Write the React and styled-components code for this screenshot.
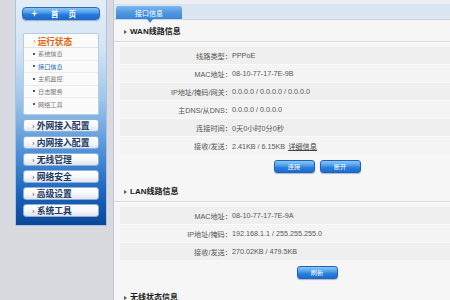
import styled, { createGlobalStyle } from 'styled-components';

const GlobalStyle = createGlobalStyle`
    html, body{
        margin: 0;
        padding: 0;
        overflow: hidden;
    }
    body{
        font-family: "Liberation Sans", "Noto Sans CJK SC", sans-serif;
    }
`

const Page = styled.div`
    display: flex;
    width: 450px;
    height: 300px;
    overflow: hidden;
    background: #d9dadf;
`

const Sidebar = styled.div`
    width: 113px;
    flex-shrink: 0;
    padding-left: 15px;
    box-sizing: border-box;
`

const Panel = styled.div`
    width: 92px;
    height: 226px;
    box-sizing: border-box;
    padding: 7px 6px 9px;
    display: flex;
    flex-direction: column;
    border: 1px solid #a9c4e2;
    border-top: none;
    background: linear-gradient(to bottom, #e3edf8 0%, #d3e4f4 22%, #9cc4ea 45%, #4d90d8 68%, #1b63bd 86%, #0b4797 100%);
`

const HomeButton = styled.div`
    height: 16px;
    box-sizing: border-box;
    display: flex;
    align-items: center;
    padding-left: 8px;
    gap: 13px;
    border: 1px solid #2a6bc0;
    border-radius: 4px;
    background: linear-gradient(to bottom, #8cc3f3 0%, #4b9ae8 45%, #2a7ee0 55%, #1b68cf 100%);
    box-shadow: 0 1px 1px rgba(20, 60, 120, 0.35);
    color: #fff;
    font-family: "Noto Sans CJK SC", sans-serif;
    font-size: 7.5px;
    font-weight: 700;
    span{
        letter-spacing: 10px;
    }
`

const MenuBox = styled.div`
    margin: 13px 1px 0;
    padding-bottom: 3px;
    background: #fbfbfb;
    border: 1px solid #b7cde5;
    border-radius: 2px;
`

const MenuHead = styled.div`
    height: 13px;
    display: flex;
    align-items: center;
    padding-left: 9px;
    gap: 2px;
    border-bottom: 1px solid #e3e3e3;
    color: #e0650e;
    font-family: "Noto Sans CJK SC", sans-serif;
    font-size: 8.6px;
    font-weight: 700;
`

const SubItem = styled.div`
    height: 12.5px;
    box-sizing: border-box;
    display: flex;
    align-items: center;
    padding-left: 9px;
    gap: 3px;
    border-bottom: ${p => p.$last ? 'none' : '1px solid #ececec'};
    color: ${p => p.$active ? '#2467b4' : '#777'};
    font-family: "Noto Sans CJK SC", sans-serif;
    font-size: 6.2px;
    &::before{
        content: '';
        width: 2px;
        height: 2px;
        background: ${p => p.$active ? '#2467b4' : '#555'};
    }
`

const MenuButton = styled.div`
    height: 13px;
    margin: 4px 1px 0;
    box-sizing: border-box;
    display: flex;
    align-items: center;
    padding-left: 8px;
    gap: 2px;
    border: 1px solid #8fb1d8;
    border-radius: 3px;
    background: linear-gradient(to bottom, #ffffff 0%, #f6f8fb 50%, #dfe5ee 100%);
    color: #1d3a63;
    font-family: "Noto Sans CJK SC", sans-serif;
    font-size: 8.8px;
    font-weight: 700;
`

const Chevron = styled.span`
    font-family: "Liberation Serif", serif;
    font-size: 8px;
    font-weight: 400;
`

const Content = styled.div`
    flex: 1;
    overflow: hidden;
    border-left: 1px solid #c4c9d0;
    background: #f6f6f6;
`

const Inner = styled.div`
    width: 400px;
`

const TopBar = styled.div`
    height: 20px;
    box-sizing: border-box;
    display: flex;
    align-items: flex-end;
    padding-left: 2px;
    border-bottom: 1px solid #c8d5e4;
    background: linear-gradient(to bottom, #eceef1 0, #eceef1 4px, #dae4f0 4px, #dde7f2 100%);
`

const Tab = styled.div`
    position: relative;
    width: 66px;
    height: 13px;
    display: flex;
    align-items: center;
    justify-content: center;
    border-radius: 3px 3px 0 0;
    background: linear-gradient(to bottom, #7db7ec 0%, #4d95df 55%, #3a86d6 100%);
    color: #fff;
    font-family: "Noto Sans CJK SC", sans-serif;
    font-size: 7px;
    &::after{
        content: '';
        position: absolute;
        left: 31px;
        bottom: -4px;
        border-left: 3px solid transparent;
        border-right: 3px solid transparent;
        border-top: 4px solid #3a86d6;
    }
`

const Section = styled.div`
    margin-top: ${p => p.$first ? '0' : '7px'};
`

const SectionHead = styled.div`
    height: 22px;
    box-sizing: border-box;
    display: flex;
    align-items: flex-end;
    gap: 3px;
    padding: 0 0 5px 10px;
    border-bottom: 1px solid #dcdcdc;
    box-shadow: 0 1px 0 #fbfbfb;
    color: #1b1b1b;
    font-family: "Liberation Sans", "Noto Sans CJK SC", sans-serif;
    font-size: 8px;
    font-weight: 700;
    line-height: 8px;
    &::before{
        content: '';
        margin-bottom: 2px;
        border-left: 3px solid #555;
        border-top: 2px solid transparent;
        border-bottom: 2px solid transparent;
    }
`

const Rows = styled.div`
    margin: 4px 0 0 6px;
`

const Row = styled.div`
    display: grid;
    grid-template-columns: 112px 1fr;
    align-items: center;
    height: 18px;
    box-sizing: border-box;
    border-top: 1px solid #fafafa;
    background: ${p => p.$odd ? '#efefef' : '#f4f4f4'};
    color: #565656;
    font-size: 7.2px;
    white-space: nowrap;
`

const Label = styled.div`
    text-align: right;
    font-family: "Liberation Sans", "Noto Sans CJK SC", sans-serif;
`

const Value = styled.div`
    font-family: "Liberation Sans", "Noto Sans CJK SC", sans-serif;
    a{
        color: #444;
        margin-left: 3px;
        text-decoration: underline;
    }
`

const ButtonRow = styled.div`
    display: flex;
    justify-content: center;
    gap: 5px;
    margin: 6px 0 0 6px;
`

const BlueButton = styled.div`
    width: 41px;
    height: 13px;
    box-sizing: border-box;
    display: flex;
    align-items: center;
    justify-content: center;
    border: 1px solid #2064b8;
    border-radius: 3px;
    background: linear-gradient(to bottom, #8cc6f5 0%, #4ea0ec 40%, #2a80dc 60%, #1b6ccf 100%);
    box-shadow: 0 1px 1px rgba(0, 40, 100, 0.3);
    color: #fff;
    font-family: "Noto Sans CJK SC", sans-serif;
    font-size: 6.2px;
`

function HomeIcon(){
    return(
        <svg width="7" height="7" viewBox="0 0 10 10">
            <path d="M5 0 L6 4 L10 5 L6 6 L5 10 L4 6 L0 5 L4 4 Z" fill="#fff" />
        </svg>
    )
}

const subItems = ['系统信息', '接口信息', '主机监控', '日志服务', '网络工具'];
const menus = ['外网接入配置', '内网接入配置', '无线管理', '网络安全', '高级设置', '系统工具'];

const wanRows = [
    ['线路类型：', 'PPPoE'],
    ['MAC地址：', '08-10-77-17-7E-9B'],
    ['IP地址/掩码/网关：', '0.0.0.0 / 0.0.0.0 / 0.0.0.0'],
    ['主DNS/从DNS：', '0.0.0.0 / 0.0.0.0'],
    ['连接时间：', '0天0小时0分0秒'],
];

const lanRows = [
    ['MAC地址：', '08-10-77-17-7E-9A'],
    ['IP地址/掩码：', '192.168.1.1 / 255.255.255.0'],
    ['接收/发送：', '270.02KB / 479.5KB'],
];

export default function App(){
    return(
        <>
            <GlobalStyle />
            <Page>
                <Sidebar>
                    <Panel>
                        <HomeButton><HomeIcon /><span>首页</span></HomeButton>
                        <MenuBox>
                            <MenuHead><Chevron>›</Chevron>运行状态</MenuHead>
                            {subItems.map((s, i) => (
                                <SubItem key={s} $active={i === 1} $last={i === subItems.length - 1}>{s}</SubItem>
                            ))}
                        </MenuBox>
                        {menus.map(m => (
                            <MenuButton key={m}><Chevron>›</Chevron>{m}</MenuButton>
                        ))}
                    </Panel>
                </Sidebar>
                <Content>
                    <Inner>
                        <TopBar>
                            <Tab>接口信息</Tab>
                        </TopBar>
                        <Section $first>
                            <SectionHead>WAN线路信息</SectionHead>
                            <Rows>
                                {wanRows.map(([l, v], i) => (
                                    <Row key={l} $odd={i % 2 === 0}>
                                        <Label>{l}</Label>
                                        <Value>{v}</Value>
                                    </Row>
                                ))}
                                <Row>
                                    <Label>接收/发送：</Label>
                                    <Value>2.41KB / 6.15KB<a>详细信息</a></Value>
                                </Row>
                            </Rows>
                            <ButtonRow>
                                <BlueButton>连接</BlueButton>
                                <BlueButton>断开</BlueButton>
                            </ButtonRow>
                        </Section>
                        <Section>
                            <SectionHead>LAN线路信息</SectionHead>
                            <Rows>
                                {lanRows.map(([l, v], i) => (
                                    <Row key={l} $odd={i % 2 === 0}>
                                        <Label>{l}</Label>
                                        <Value>{v}</Value>
                                    </Row>
                                ))}
                            </Rows>
                            <ButtonRow>
                                <BlueButton>刷新</BlueButton>
                            </ButtonRow>
                        </Section>
                        <Section>
                            <SectionHead>无线状态信息</SectionHead>
                        </Section>
                    </Inner>
                </Content>
            </Page>
        </>
    )
}
